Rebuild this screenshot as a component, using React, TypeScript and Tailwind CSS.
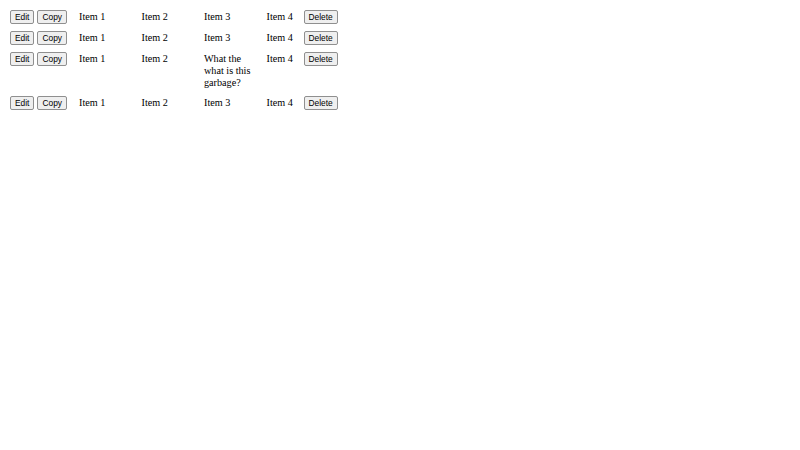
const rows = [
    { id: 1, cells: ['Item 1', 'Item 2', 'Item 3', 'Item 4'] },
    { id: 2, cells: ['Item 1', 'Item 2', 'Item 3', 'Item 4'] },
    { id: 3, cells: ['Item 1', 'Item 2', 'What the what is this garbage?', 'Item 4'] },
    { id: 4, cells: ['Item 1', 'Item 2', 'Item 3', 'Item 4'] },
];

function Btn({ label }: { label: string }) {
    return (
        <button className="rounded-[2px] border border-[#8f8f8f] bg-[#efefef] px-[4px] py-[1px] font-['Liberation_Sans',Arial,sans-serif] text-[8.4px] leading-[10px] text-black">
            {label}
        </button>
    );
}

export default function App() {
    return (
        <div className="min-h-[450px] bg-white px-[10px] pt-[10px] font-['Liberation_Serif','Times_New_Roman',serif] text-[10.2px] leading-[12px] text-black">
            <div className="flex flex-col gap-[7px]">
                {rows.map((row) => (
                    <div key={row.id} className="flex items-baseline">
                        <div className="flex w-[69px] shrink-0 gap-[3px]">
                            <Btn label="Edit" />
                            <Btn label="Copy" />
                        </div>
                        <div className="w-[62.5px] shrink-0 pr-[6px]">{row.cells[0]}</div>
                        <div className="w-[62.5px] shrink-0 pr-[6px]">{row.cells[1]}</div>
                        <div className="w-[62.5px] shrink-0 pr-[6px]">{row.cells[2]}</div>
                        <div className="w-[37px] shrink-0">{row.cells[3]}</div>
                        <Btn label="Delete" />
                    </div>
                ))}
            </div>
        </div>
    );
}
